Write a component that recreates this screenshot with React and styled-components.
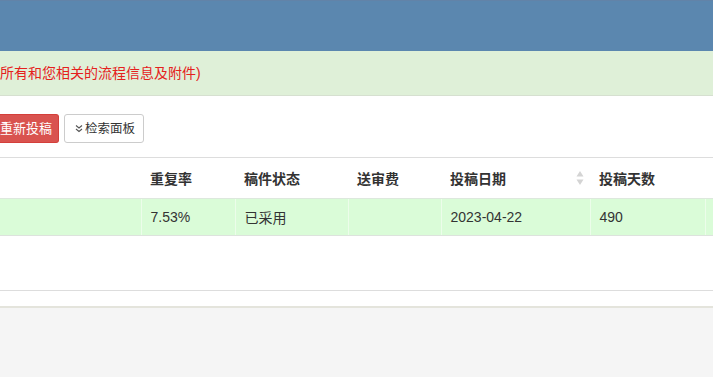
import React from "react";
import styled, { createGlobalStyle } from "styled-components";

const Global = createGlobalStyle`
  html, body { margin: 0; padding: 0; background: #f5f5f5; }
  body {
    font-family: "Liberation Sans", "Noto Sans CJK SC", Arial, sans-serif;
    font-size: 14px;
    color: #333;
    overflow: hidden;
  }
`;

const Page = styled.div`
  width: 713px;
  min-height: 377px;
  display: flex;
  flex-direction: column;
  background: #f5f5f5;
`;

const TopBar = styled.div`
  height: 51px;
  background: #5b87af;
  border-top: 1px solid #6283a8;
  box-sizing: border-box;
`;

const Notice = styled.div`
  height: 45px;
  background: #dff0d8;
  border-bottom: 1px solid #d6e0d0;
  box-sizing: border-box;
  display: flex;
  align-items: center;
  color: #e5211c;
  font-size: 14px;
  line-height: 18px;
  padding-bottom: 1px;
`;

const Panel = styled.div`
  background: #fff;
  padding-top: 18px;
  border-bottom: 2px solid #e4e4dc;
  display: flex;
  flex-direction: column;
`;

const Toolbar = styled.div`
  display: flex;
  gap: 5px;
  height: 29px;
  margin-bottom: 14px;
`;

const Button = styled.button`
  height: 29px;
  box-sizing: border-box;
  font-family: inherit;
  font-size: ${(p) => (p.$danger ? "13px" : "12.5px")};
  line-height: 18px;
  border-radius: 3px;
  display: flex;
  align-items: center;
  gap: 2px;
  cursor: pointer;
  padding: ${(p) => (p.$danger ? "0 6px 0 0" : "0 8px 0 10px")};
  background: ${(p) => (p.$danger ? "#d9534f" : "#fff")};
  color: ${(p) => (p.$danger ? "#fff" : "#333")};
  border: 1px solid ${(p) => (p.$danger ? "#d43f3a" : "#ccc")};
  ${(p) => p.$danger && "border-left: none; border-top-left-radius: 0; border-bottom-left-radius: 0;"}
`;

const Table = styled.table`
  width: 720px;
  border-collapse: collapse;
  table-layout: fixed;
  border-top: 1px solid #ddd;
`;

const Th = styled.th`
  height: 41px;
  box-sizing: border-box;
  text-align: left;
  font-weight: bold;
  font-size: 14px;
  color: #333;
  padding: 0 0 0 9px;
  border-bottom: 1px solid #dde8dd;
  position: relative;
`;

const Td = styled.td`
  height: 37px;
  box-sizing: border-box;
  background: #dafcd8;
  padding: 0 0 0 9px;
  font-size: 14px;
  color: #333;
  border-bottom: 1px solid #dde3dd;
  border-right: 1px solid #ecfdea;
`;

const SortIcon = styled.svg`
  position: absolute;
  right: 6px;
  top: 12px;
`;

const Spacer = styled.div`
  height: 54px;
  border-bottom: 1px solid #ddd;
`;

const Footer = styled.div`
  height: 15px;
`;

const cols = [141, 94, 113, 93, 149, 115, 15];

export default function App() {
  return (
    <>
      <Global />
      <Page>
        <TopBar />
        <Notice>
          <span>所有和您相关的流程信息及附件)</span>
        </Notice>
        <Panel>
          <Toolbar>
            <Button $danger>重新投稿</Button>
            <Button>
              <svg width="8" height="9" viewBox="0 0 8 9">
                <path d="M1 1.5 L4 4 L7 1.5 M1 5 L4 7.5 L7 5" fill="none" stroke="#555" strokeWidth="1.1" />
              </svg>
              检索面板
            </Button>
          </Toolbar>
          <Table>
            <colgroup>
              {cols.map((w, i) => (
                <col key={i} style={{ width: w }} />
              ))}
            </colgroup>
            <thead>
              <tr>
                <Th />
                <Th>重复率</Th>
                <Th>稿件状态</Th>
                <Th>送审费</Th>
                <Th>
                  投稿日期
                  <SortIcon width="8" height="16" viewBox="0 0 8 16">
                    <path d="M4 1 L7.5 6.5 L0.5 6.5 Z" fill="#d4d4d4" />
                    <path d="M4 15 L7.5 9.5 L0.5 9.5 Z" fill="#d4d4d4" />
                  </SortIcon>
                </Th>
                <Th>投稿天数</Th>
                <Th />
              </tr>
            </thead>
            <tbody>
              <tr>
                <Td />
                <Td>7.53%</Td>
                <Td>已采用</Td>
                <Td />
                <Td>2023-04-22</Td>
                <Td>490</Td>
                <Td />
              </tr>
            </tbody>
          </Table>
          <Spacer />
          <Footer />
        </Panel>
      </Page>
    </>
  );
}
